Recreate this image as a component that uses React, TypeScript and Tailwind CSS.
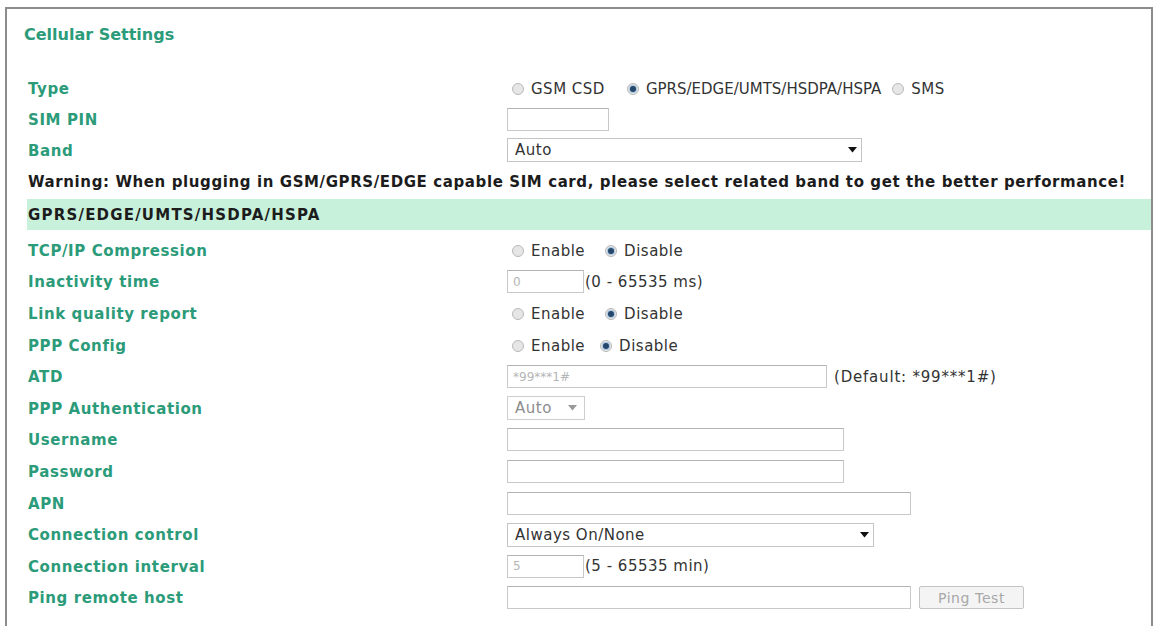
import React from "react";

const FONT = { fontFamily: '"DejaVu Sans", Verdana, sans-serif' };

function Radio({ checked }: { checked?: boolean }) {
  return (
    <span className="relative inline-block w-[12px] h-[12px] rounded-full border border-[#b9b9b9] bg-[#e6e6e6] shrink-0">
      {checked && (
        <span className="absolute left-[2px] top-[2px] w-[6px] h-[6px] rounded-full bg-[#25476b] ring-1 ring-[#a9c6e2]" />
      )}
    </span>
  );
}

function Caret({ light }: { light?: boolean }) {
  return (
    <svg width="9" height="6" viewBox="0 0 9 6" className="shrink-0">
      <path d="M0 0 L9 0 L4.5 5.5 Z" fill={light ? "#9a9a9a" : "#111"} />
    </svg>
  );
}

function Row({
  label,
  children,
  tall,
}: {
  label: string;
  children?: React.ReactNode;
  tall?: boolean;
}) {
  return (
    <div
      className={`grid grid-cols-[479px_1fr] items-center ${
        tall ? "h-[31.6px]" : "h-[31px]"
      }`}
    >
      <div className="pt-[2px] font-bold text-[15px] tracking-[0.6px] text-[#2b9b79] leading-none whitespace-nowrap">
        {label}
      </div>
      <div className="flex items-center text-[15px] tracking-[0.5px] text-[#333] leading-none whitespace-nowrap">
        {children}
      </div>
    </div>
  );
}

type Item = { text: string; checked?: boolean; tight?: boolean };

function Choice({ items, gaps }: { items: Item[]; gaps: number[] }) {
  return (
    <div className="flex items-center pl-[5px] pt-[2px]">
      {items.map((it, i) => (
        <span
          key={it.text}
          className="flex items-center gap-[7px]"
          style={{ marginLeft: i === 0 ? 0 : gaps[i - 1] }}
        >
          <Radio checked={it.checked} />
          <span className={it.tight ? "tracking-normal" : ""}>{it.text}</span>
        </span>
      ))}
    </div>
  );
}

function Field({ w, value }: { w: number; value?: string }) {
  return (
    <div
      className="h-[23px] border border-[#c9c9c9] border-t-[#b3b3b3] bg-white flex items-center pl-[5px] text-[12px] tracking-normal text-[#b5b5b5] shrink-0"
      style={{ width: w }}
    >
      {value}
    </div>
  );
}

function Dropdown({ w, value, light }: { w: number; value: string; light?: boolean }) {
  return (
    <div
      className={`h-[24px] border flex items-center justify-between pl-[7px] bg-white shrink-0 ${
        light
          ? "border-[#cfcfcf] text-[#8d8d8d] pr-[7px]"
          : "border-[#c4c4c4] text-[#333] pr-[4px]"
      }`}
      style={{ width: w }}
    >
      <span className="pt-[1px]">{value}</span>
      <Caret light={light} />
    </div>
  );
}

export default function App() {
  return (
    <div className="w-[1156px] h-[626px] bg-white overflow-hidden pt-[7px] pl-[5px]" style={FONT}>
      <div className="w-[1148px] h-[640px] border-2 border-b-0 border-[#8c8c8c] pl-[21px]">
        <div className="mt-[16px] h-[20px] leading-[20px] -ml-[4px] text-[16px] font-bold text-[#2b9b79]">
          Cellular Settings
        </div>

        <div className="mt-[27.5px]">
          <Row label="Type">
            <Choice
              gaps={[22, 11]}
              items={[
                { text: "GSM CSD" },
                { text: "GPRS/EDGE/UMTS/HSDPA/HSPA", checked: true, tight: true },
                { text: "SMS" },
              ]}
            />
          </Row>
          <Row label="SIM PIN">
            <Field w={102} />
          </Row>
          <Row label="Band">
            <Dropdown w={355} value="Auto" />
          </Row>
          <div className="h-[31px] pt-[2px] flex items-center font-bold text-[15px] tracking-[0.6px] text-[#1c1c1c] leading-none whitespace-nowrap">
            Warning: When plugging in GSM/GPRS/EDGE capable SIM card, please select related band to get the better performance!
          </div>
        </div>

        <div className="mt-[2.5px] h-[31px] -ml-[1px] pl-[1px] pt-[2px] bg-[#c8f1dc] flex items-center font-bold text-[15px] tracking-[1.2px] text-[#1c1c1c] leading-none">
          GPRS/EDGE/UMTS/HSDPA/HSPA
        </div>

        <div className="mt-[4.5px]">
          <Row label="TCP/IP Compression" tall>
            <Choice gaps={[20]} items={[{ text: "Enable" }, { text: "Disable", checked: true }]} />
          </Row>
          <Row label="Inactivity time" tall>
            <Field w={77} value="0" />
            <span className="ml-[1px] pt-[1px]">(0 - 65535 ms)</span>
          </Row>
          <Row label="Link quality report" tall>
            <Choice gaps={[20]} items={[{ text: "Enable" }, { text: "Disable", checked: true }]} />
          </Row>
          <Row label="PPP Config" tall>
            <Choice gaps={[15]} items={[{ text: "Enable" }, { text: "Disable", checked: true }]} />
          </Row>
          <Row label="ATD" tall>
            <Field w={320} value="*99***1#" />
            <span className="ml-[7px] pt-[1px] tracking-[0.8px]">(Default: *99***1#)</span>
          </Row>
          <Row label="PPP Authentication" tall>
            <Dropdown w={78} value="Auto" light />
          </Row>
          <Row label="Username" tall>
            <Field w={337} />
          </Row>
          <Row label="Password" tall>
            <Field w={337} />
          </Row>
          <Row label="APN" tall>
            <Field w={404} />
          </Row>
          <Row label="Connection control" tall>
            <Dropdown w={367} value="Always On/None" />
          </Row>
          <Row label="Connection interval" tall>
            <Field w={77} value="5" />
            <span className="ml-[1px] pt-[1px]">(5 - 65535 min)</span>
          </Row>
          <Row label="Ping remote host" tall>
            <Field w={404} />
            <button
              disabled
              className="ml-[8px] w-[105px] h-[23px] rounded-[2px] border border-[#c4c4c4] bg-[#f4f4f4] text-[14px] tracking-[0.6px] text-[#a8a8a8]"
            >
              Ping Test
            </button>
          </Row>
        </div>
      </div>
    </div>
  );
}
